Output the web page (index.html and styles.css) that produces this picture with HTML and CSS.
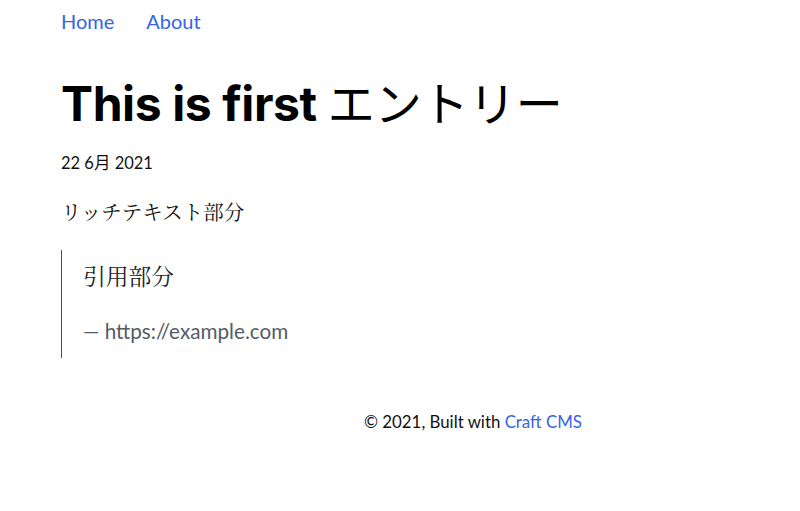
FILE: index.html
```html
<!DOCTYPE html>
<html lang="ja">
<head>
<meta charset="utf-8">
<title>This is first エントリー</title>
<link rel="stylesheet" href="styles.css">
</head>
<body>
<div class="page">
  <nav class="nav">
    <a href="#">Home</a>
    <a href="#">About</a>
  </nav>
  <main class="entry">
    <h1 class="title">This is first <span class="title-ja">エントリー</span></h1>
    <p class="date">22 6月 2021</p>
    <div class="body">
      <p class="rich">リッチテキスト部分</p>
      <blockquote class="quote">
        <p class="quote-text">引用部分</p>
        <cite class="quote-cite">— https://example.com</cite>
      </blockquote>
    </div>
  </main>
  <footer class="footer">© 2021, Built with <a href="#">Craft CMS</a></footer>
</div>
</body>
</html>
```

FILE: styles.css
```css
html, body {
  margin: 0;
  padding: 0;
  background: #fff;
}
body {
  font-family: "Lato", "Noto Sans CJK JP", sans-serif;
  color: #111;
}
.page {
  padding: 0 0 0 61px;
}
a {
  color: #3563e9;
  text-decoration: none;
}
.nav {
  display: flex;
  gap: 32px;
  padding-top: 9px;
  font-size: 20px;
  line-height: 24px;
}
.title {
  margin: 41px 0 0;
  font-family: "Inter", "Noto Sans CJK JP", sans-serif;
  font-size: 48px;
  line-height: 60px;
  font-weight: 700;
  color: #000;
  letter-spacing: -0.4px;
}
.title-ja {
  font-weight: 400;
  font-size: 47px;
  letter-spacing: 0;
}
.date {
  margin: 19px 0 0;
  font-size: 16.5px;
  line-height: 20px;
}
.rich {
  margin: 25px 0 0;
  font-family: "Noto Serif CJK JP", "Noto Sans CJK JP", serif;
  font-size: 20.5px;
  line-height: 26px;
}
.quote {
  margin: 26px 0 0;
  padding: 11px 0 15px 21px;
  border-left: 1px solid #4a5060;
}
.quote-text {
  margin: 0;
  font-family: "Noto Serif CJK JP", "Noto Sans CJK JP", serif;
  font-size: 22.75px;
  line-height: 30px;
  color: #222;
}
.quote-cite {
  display: block;
  margin-top: 28px;
  font-style: normal;
  font-size: 20.7px;
  line-height: 24px;
  color: #555b66;
}
.footer {
  margin-top: 54px;
  padding-left: 85px;
  text-align: center;
  font-size: 16.85px;
  line-height: 20px;
  color: #111;
}
```
